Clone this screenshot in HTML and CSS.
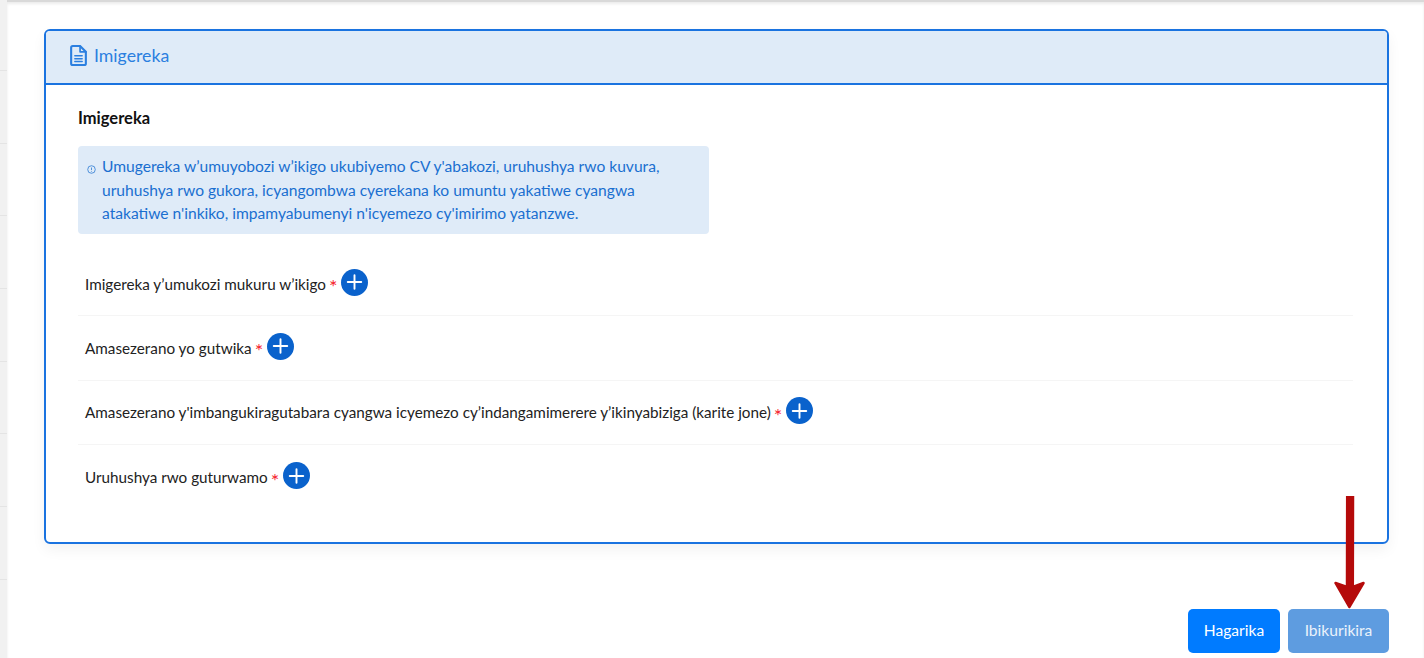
FILE: index.html
```html
<!DOCTYPE html>
<html lang="rw">
<head>
<meta charset="utf-8">
<title>Imigereka</title>
<link rel="stylesheet" href="styles.css">
</head>
<body>
<div class="backdrop">
  <div class="bd-row"></div><div class="bd-row"></div><div class="bd-row"></div><div class="bd-row"></div>
  <div class="bd-row"></div><div class="bd-row"></div><div class="bd-row"></div><div class="bd-row"></div>
</div>
<main class="modal">
  <section class="card">
    <header class="card-head">
      <svg class="doc-icon" viewBox="0 0 16 20" width="17" height="21" fill="none" stroke="currentColor" stroke-width="2" stroke-linejoin="round" stroke-linecap="round">
        <path d="M2.500 1h7l5.500 5.500V17.500a1.500 1.500 0 0 1-1.500 1.500h-11A1.500 1.500 0 0 1 1 17.500v-15A1.500 1.500 0 0 1 2.500 1z"/>
        <path d="M9.500 1v5.500H15" stroke-width="1.600"/>
        <path d="M4.500 10.300h7M4.500 13h7M4.500 15.700h7" stroke-width="1.400"/>
      </svg>
      <span>Imigereka</span>
    </header>
    <div class="card-body">
      <h2 class="title">Imigereka</h2>
      <div class="notice">
        <svg class="info" viewBox="0 0 10 10" width="9" height="9" fill="none" stroke="currentColor" stroke-width="0.8"><circle cx="5" cy="5" r="4.200"/><path d="M5 2.800v2.800M5 6.600v0.800"/></svg>
        <p>Umugereka w’umuyobozi w’ikigo ukubiyemo CV y'abakozi, uruhushya rwo kuvura, uruhushya rwo gukora, icyangombwa cyerekana ko umuntu yakatiwe cyangwa atakatiwe n'inkiko, impamyabumenyi n'icyemezo cy'imirimo yatanzwe.</p>
      </div>
      <ul class="files">
        <li class="file"><span>Imigereka y’umukozi mukuru w’ikigo</span><span class="req">*</span><button class="add" aria-label="Add"><svg viewBox="0 0 28 28" width="28" height="28"><path d="M14 7v14M7 14h14" stroke="#fff" stroke-width="2" stroke-linecap="round"/></svg></button></li>
        <li class="file"><span>Amasezerano yo gutwika</span><span class="req">*</span><button class="add" aria-label="Add"><svg viewBox="0 0 28 28" width="28" height="28"><path d="M14 7v14M7 14h14" stroke="#fff" stroke-width="2" stroke-linecap="round"/></svg></button></li>
        <li class="file"><span>Amasezerano y'imbangukiragutabara cyangwa icyemezo cy’indangamimerere y’ikinyabiziga (karite jone)</span><span class="req">*</span><button class="add" aria-label="Add"><svg viewBox="0 0 28 28" width="28" height="28"><path d="M14 7v14M7 14h14" stroke="#fff" stroke-width="2" stroke-linecap="round"/></svg></button></li>
        <li class="file"><span>Uruhushya rwo guturwamo</span><span class="req">*</span><button class="add" aria-label="Add"><svg viewBox="0 0 28 28" width="28" height="28"><path d="M14 7v14M7 14h14" stroke="#fff" stroke-width="2" stroke-linecap="round"/></svg></button></li>
      </ul>
    </div>
  </section>
  <footer class="actions">
    <button class="btn btn-cancel">Hagarika</button>
    <button class="btn btn-next">Ibikurikira</button>
  </footer>
</main>
<svg class="arrow" viewBox="0 0 34 116" width="34" height="116"><path d="M15.200 0h5.800l-.2 91 10.700-4L17.300 111 3.500 87l11.500 4z" fill="#b50a0a" stroke="#b50a0a" stroke-width="2.500" stroke-linejoin="round"/></svg>
</body>
</html>
```
FILE: styles.css
```css
* { box-sizing: border-box; }
html, body { margin: 0; height: 100%; overflow: hidden; }
body {
  width: 1424px; height: 658px; position: relative; background: #fff;
  font-family: "Lato", "Noto Sans", sans-serif; color: #212529;
}
.backdrop {
  position: absolute; left: 0; top: 0; bottom: 0; width: 7px; background: #f1f1f1;
  padding-top: 70px; display: flex; flex-direction: column; gap: 71.700px;
}
.bd-row { height: 1px; background: #e4e4e4; }
.modal {
  position: absolute; left: 7px; top: 0; right: 0; bottom: 0; background: #fff;
  border-top: 2px solid #d9d9d9; box-shadow: inset 0 2px 3px rgba(0,0,0,.08);
  padding: 27px 35px 5px 37px; display: flex; flex-direction: column;
}
.card {
  height: 515px; border: 2px solid #1a73e0; border-radius: 6px; overflow: hidden;
  box-shadow: 0 6px 14px rgba(0,0,0,.05);
}
.card-head {
  height: 54px; background: #dfebf8; border-bottom: 2px solid #1a73e0; color: #2b7fe0;
  display: flex; align-items: center; gap: 7px; padding: 0 0 4px 24px; font-size: 17.700px;
}
.doc-icon { flex: none; }
.card-body { padding: 23px 34px 0 32px; }
.title { margin: 0; font-size: 16.500px; font-weight: 700; line-height: 20px; color: #111; }
.notice {
  width: 631px; height: 88px; margin-top: 18px; background: #dfebf8; border-radius: 4px;
  display: flex; padding: 9px 8px 0 9px; color: #1a6fd0; font-size: 15.600px; line-height: 23.500px;
}
.info { flex: none; margin: 10px 6px 0 0; }
.notice p { margin: 0; width: 585px; }
.files { list-style: none; margin: 18px 0 0; padding: 0; }
.file {
  height: 64.330px; padding: 0 0 0 7px; display: flex; align-items: center; font-size: 15.250px;
  border-bottom: 1px solid #f5f5f5; color: #222;
}
.file:last-child { border-bottom: 0; }
.req { color: #f5222d; margin: 5px 0 0 3px; font-size: 20px; line-height: 1; }
.add {
  width: 27px; height: 27px; margin: -3px 0 0 4px; padding: 0; border: 0; border-radius: 50%;
  background: #0a62cc; display: flex; align-items: center; justify-content: center;
}
.actions { display: flex; justify-content: flex-end; gap: 8px; margin-top: 65px; }
.btn {
  height: 44px; border: 0; border-radius: 5px; color: #fff; font: inherit; font-size: 15.600px;
  padding: 0 0 2px;
}
.btn-cancel { width: 92px; background: #007bff; }
.btn-next { width: 101px; background: #5e9ce0; color: #eaf2fb; }
.arrow { position: absolute; left: 1332px; top: 496px; }
```
